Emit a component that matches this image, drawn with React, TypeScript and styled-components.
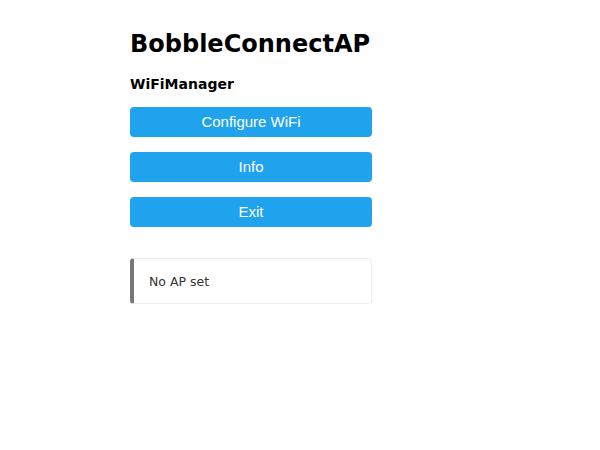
import React from 'react';
import styled, { createGlobalStyle } from 'styled-components';

const GlobalStyle = createGlobalStyle`
  html, body {
    margin: 0;
    padding: 0;
    background: #fff;
  }

  body {
    font-family: "DejaVu Sans", Verdana, sans-serif;
    color: #000;
  }
`;

const Page = styled.div`
  width: 600px;
  height: 450px;
  padding: 28px 0 0 130px;
  box-sizing: border-box;
`;

const Wrap = styled.div`
  width: 242px;
  display: flex;
  flex-direction: column;
`;

const Title = styled.h1`
  margin: 0;
  font-size: 24px;
  font-weight: bold;
  line-height: 32px;
`;

const Subtitle = styled.h3`
  margin: 14px 0 13px;
  font-size: 14px;
  font-weight: bold;
  line-height: 20px;
`;

const Menu = styled.form`
  display: flex;
  flex-direction: column;
  gap: 15px;
`;

const Button = styled.button`
  width: 100%;
  height: 30px;
  border: 0;
  border-radius: 4px;
  background-color: #1fa3ec;
  color: #fff;
  font-family: "Liberation Sans", Arial, sans-serif;
  font-size: 15px;
  padding: 0 0 2px;
  cursor: pointer;
`;

const Message = styled.div`
  margin-top: 31px;
  height: 46px;
  box-sizing: border-box;
  display: flex;
  align-items: center;
  padding-left: 15px;
  border: 1px solid #eee;
  border-left: 4px solid #777;
  border-radius: 4px;
  font-size: 12.5px;
  color: #333;
`;

const menuItems = ['Configure WiFi', 'Info', 'Exit'];

const App: React.FC = () => {
  return (
    <Page>
      <GlobalStyle />
      <Wrap>
        <Title>BobbleConnectAP</Title>
        <Subtitle>WiFiManager</Subtitle>
        <Menu onSubmit={(e) => e.preventDefault()}>
          {menuItems.map((item) => (
            <Button key={item} type="button">{item}</Button>
          ))}
        </Menu>
        <Message>No AP set</Message>
      </Wrap>
    </Page>
  );
};

export default App;
